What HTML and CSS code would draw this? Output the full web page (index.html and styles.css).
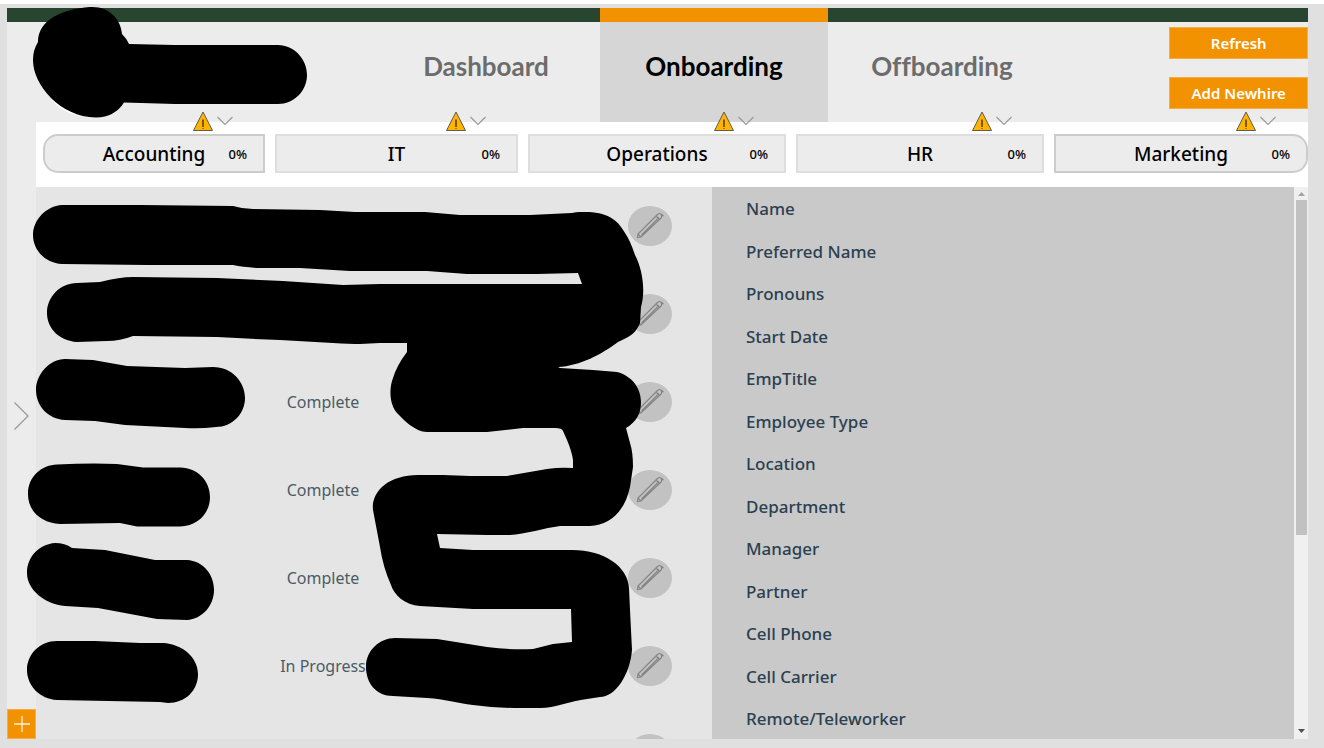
FILE: index.html
```html
<!DOCTYPE html>
<html lang="en">
<head>
<meta charset="utf-8">
<title>Onboarding</title>
<link rel="stylesheet" href="styles.css">
</head>
<body>
<svg class="symbols" aria-hidden="true">
  <symbol id="warning" viewBox="0 0 20 20">
    <path d="M10 1 19.500 19.500H.5Z" fill="#ffb400" stroke="#5f5b50" stroke-width="1"/>
    <path d="M10 8.500v7.500" stroke="#4d3b08" stroke-width="1.500"/>
    <path d="M10 17v1" stroke="#4d3b08" stroke-width="1"/>
  </symbol>
  <symbol id="down" viewBox="0 0 16 20">
    <path d="m.5 6 7.500 7.500L15.500 6" fill="none" stroke="#999" stroke-width="1.200"/>
  </symbol>
  <symbol id="pencil" viewBox="0 0 44 40">
    <path d="M9.500 31.500 10 28 29.500 8.500Q31.500 6.500 33 8.500T33 12L13 31ZM10 28l3 3M28 10l3.500 3.500M13.500 29 31 11.500M33 8l2.500 2" fill="none" stroke="#858585" stroke-width="1.200"/>
  </symbol>
</svg>
<div class="app">
  <header class="header">
    <div class="brand"></div>
    <nav class="tabs">
      <a class="tab" href="#dashboard">Dashboard</a>
      <a class="tab active" href="#onboarding" aria-current="page">Onboarding</a>
      <a class="tab" href="#offboarding">Offboarding</a>
    </nav>
    <div class="actions">
      <button class="action" type="button">Refresh</button>
      <button class="action" type="button">Add Newhire</button>
    </div>
  </header>
  <div class="body">
    <aside class="rail">
      <button class="expand" type="button" aria-label="Expand"><svg width="15" height="28" viewBox="0 0 15 28"><path d="m.5.5 13.500 13.500L.5 27.500" fill="none" stroke="#999" stroke-width="1.300"/></svg></button>
      <button class="add" type="button" aria-label="Add"><svg width="16" height="16" viewBox="0 0 16 16"><path d="M8 0v16M0 8h16" stroke="#fff2dc" stroke-width="1.300"/></svg></button>
    </aside>
    <main class="main">
      <section class="departments">
        <div class="department"><button class="card first" type="button"><span class="title">Accounting</span><span class="percent">0%</span></button><span class="flags"><svg class="warn"><use href="#warning"/></svg><svg class="chevron"><use href="#down"/></svg></span></div>
        <div class="department"><button class="card" type="button"><span class="title">IT</span><span class="percent">0%</span></button><span class="flags"><svg class="warn"><use href="#warning"/></svg><svg class="chevron"><use href="#down"/></svg></span></div>
        <div class="department"><button class="card" type="button"><span class="title">Operations</span><span class="percent">0%</span></button><span class="flags"><svg class="warn"><use href="#warning"/></svg><svg class="chevron"><use href="#down"/></svg></span></div>
        <div class="department"><button class="card" type="button"><span class="title">HR</span><span class="percent">0%</span></button><span class="flags"><svg class="warn"><use href="#warning"/></svg><svg class="chevron"><use href="#down"/></svg></span></div>
        <div class="department"><button class="card last" type="button"><span class="title">Marketing</span><span class="percent">0%</span></button><span class="flags"><svg class="warn"><use href="#warning"/></svg><svg class="chevron"><use href="#down"/></svg></span></div>
      </section>
      <div class="content">
        <div class="list">
          <div class="rows">
            <div class="row"><span class="status"></span><button class="edit" type="button" aria-label="Edit"><svg><use href="#pencil"/></svg></button></div>
            <div class="row"><span class="status"></span><button class="edit" type="button" aria-label="Edit"><svg><use href="#pencil"/></svg></button></div>
            <div class="row"><span class="status">Complete</span><button class="edit" type="button" aria-label="Edit"><svg><use href="#pencil"/></svg></button></div>
            <div class="row"><span class="status">Complete</span><button class="edit" type="button" aria-label="Edit"><svg><use href="#pencil"/></svg></button></div>
            <div class="row"><span class="status">Complete</span><button class="edit" type="button" aria-label="Edit"><svg><use href="#pencil"/></svg></button></div>
            <div class="row"><span class="status">In Progress</span><button class="edit" type="button" aria-label="Edit"><svg><use href="#pencil"/></svg></button></div>
            <div class="row"><span class="status"></span><button class="edit" type="button" aria-label="Edit"><svg><use href="#pencil"/></svg></button></div>
          </div>
        </div>
        <section class="details">
          <ul class="fields">
            <li>Name</li>
            <li>Preferred Name</li>
            <li>Pronouns</li>
            <li>Start Date</li>
            <li>EmpTitle</li>
            <li>Employee Type</li>
            <li>Location</li>
            <li>Department</li>
            <li>Manager</li>
            <li>Partner</li>
            <li>Cell Phone</li>
            <li>Cell Carrier</li>
            <li>Remote/Teleworker</li>
          </ul>
          <div class="scrollbar" aria-hidden="true">
            <svg width="7" height="13" viewBox="0 0 7 13"><path d="M0 9 3.500 5 7 9Z" fill="#a3a3a3"/></svg>
            <div class="track"><div class="thumb"></div></div>
            <svg width="7" height="16" viewBox="0 0 7 16"><path d="M0 6h7L3.500 10Z" fill="#505050"/></svg>
          </div>
        </section>
      </div>
    </main>
  </div>
</div>
<svg class="redactions" viewBox="0 0 1324 748" preserveAspectRatio="none" aria-hidden="true">
  <path d="M48 95Q58 111 79 116L82 112 60 96Z" fill="#fff"/>
  <path d="M38 42C38 20 62 9 90 7C110 6 121 20 122 34Q127 39 129 44L175 45H278C294 45 307 59 307 75S294 104 278 104H175L124 102.500Q115 117 96 117.500C60 117 33 85 33 60Q33 50 38 42Z"/>
  <path d="M62 205H140L233 206Q243 209 253 209L320 210 355 212H425L460 215H530L572 213Q576 212 580 212C605 211 617 218 625 233Q630 240 635 255C642 268 646 290 641 307L640 323C636 332 632 336 618 342C602 354 580 366 558 367L560 368 593 370 617 372C632 376 641 388 641 402C641 414 636 422 626 428L630 443Q633 452 633 467L630 487C625 511 610 525 590 526H560C545 528 525 534 510 535H487L437 534 440 548 473 550H572C605 550 628 567 629 588L630 610 632 650C630 675 615 697 600 697L587 699C570 701 555 708 540 708H520Q495 708 473 705C457 703 445 699 427 698L393 696C376 696 366 683 366 667C366 650 380 638 395 638L437 639 487 647Q510 650 533 649L553 644 572 642 571 609H473L420 606C405 605 394 595 391 585Q383 567 380 547L373 510C371 492 388 475 418 475H443L470 476H507L547 469Q560 467 573 468V460Q572 452 567 440L563 431Q562 428 555 428H523L487 432H427C415 432 403 419 398 414C389 405 389 388 393 378Q397 365 407 352V343H380L360 344Q350 344 333 343L280 340Q250 339 217 337L133 336Q120 341 107 341L77 342C60 341 47 329 47 313S60 283 77 283L100 282Q120 277 133 277L217 278 283 281 343 285 380 284H582L578 273 537 274H467L427 271H350L300 268H257Q243 267 233 265H147L62 264C45 263 33 250 33 235S46 206 62 205Z"/>
  <path d="M65 359 93 360 127 366 185 368 213 367C232 367 245 382 245 398S232 427 216 427Q200 429 185 428L125 425 95 421 65 420C48 419 36 406 36 390S50 359 65 359Z"/>
  <path d="M57 464.500Q90 463 117 464L143 467.500H180C198 468 210 481 210 497S198 526 180 526.500H137L120 523 60 524C42 523 28 512 28 494S42 465 57 464.500Z"/>
  <path d="M55 543Q65 543 72 548L105 550 155 560H187C203 561 214 574 214 590S202 619 187 620L157 619 98 608 65 606C45 604 27 590 27 573S40 544 55 543Z"/>
  <path d="M57 641H95L140 643H163C182 644 198 657 198 674S185 703 168 703L160 702 57 700C40 699 27 686 27 670S40 641 57 641Z"/>
</svg>
</body>
</html>
```
FILE: styles.css
```css
* { box-sizing: border-box; }
body {
  margin: 0;
  background: #e0e0e0;
  border-top: 4px solid #fff;
  font-family: "Noto Sans", "Open Sans", sans-serif;
}
button { font: inherit; border: 0; padding: 0; cursor: pointer; }
.symbols { display: none; }
.app {
  display: flex;
  flex-direction: column;
  min-height: calc(100vh - 4px);
  padding: 4px 16px 9px 7px;
}
.header {
  display: grid;
  grid-template-columns: 365fr 684fr 252fr;
  height: 114px;
  background: linear-gradient(#28462f 14px, #ececec 14px);
}
.tabs { display: grid; grid-template-columns: repeat(3, 1fr); }
.tab {
  display: flex;
  align-items: center;
  justify-content: center;
  border-top: 14px solid #28462f;
  padding-bottom: 12px;
  color: #6c6c6c;
  font: 700 26px/32px Lato, sans-serif;
  font-variant-ligatures: none;
  text-decoration: none;
}
.tab.active { border-color: #f39200; background: #d6d6d6; color: #000; }
.actions {
  display: flex;
  flex-direction: column;
  align-items: flex-end;
  gap: 18px;
  padding-top: 19px;
}
.action {
  width: 55%;
  height: 32px;
  background: #f39200;
  border: 1px solid #f6ad44;
  color: #fff;
  font-size: 15px;
  font-weight: 600;
}
.body { display: flex; flex: 1; }
.rail { display: flex; flex-direction: column; width: 29px; background: #ececec; }
.expand { display: grid; place-items: center; flex: 1; background: none; }
.add {
  display: grid;
  place-items: center;
  height: 30px;
  background: #f39200;
  border: 1px solid #f6ad44;
}
.main { display: flex; flex-direction: column; flex: 1; min-width: 0; }
.departments {
  display: grid;
  grid-template-columns: 222fr 243fr 258fr 248fr 254fr;
  gap: 10px;
  padding: 12px 0 14px 7px;
  background: #fff;
}
.department { position: relative; }
.card {
  display: grid;
  grid-template-columns: 1fr auto 1fr;
  align-items: center;
  width: 100%;
  height: 39px;
  padding: 0 16px;
  background: #ececec;
  border: 2px solid #dedede;
  color: #000;
}
.card.first { border-color: #ccc; border-radius: 15px 0 0 15px; }
.card.last { border-color: #ccc; border-radius: 0 15px 15px 0; }
.title { grid-column: 2; font-size: 19px; font-weight: 500; }
.percent { font-size: 13px; text-align: right; font-weight: 500; }
.flags { position: absolute; top: -23px; right: 32px; display: flex; gap: 4px; }
.warn { width: 20px; height: 20px; }
.chevron { width: 16px; height: 20px; }
.content { display: grid; grid-template-columns: 676fr 596fr; flex: 1; }
.list { position: relative; overflow: hidden; background: #e5e5e5; }
.rows { position: absolute; inset: 0; }
.row {
  display: grid;
  grid-template-columns: 207fr 160px 225fr 44px;
  align-items: center;
  height: 88px;
  padding: 0 40px 10px 0;
}
.status { grid-column: 2; color: #4c5b66; font-size: 16px; text-align: center; }
.edit { grid-column: 4; width: 44px; height: 40px; border-radius: 50%; background: #c2c2c2; }
.edit svg { display: block; width: 44px; height: 40px; }
.details { display: flex; background: #c9c9c9; }
.fields {
  display: flex;
  flex: 1;
  flex-direction: column;
  justify-content: space-between;
  margin: 0;
  padding: 12px 0 10px 34px;
  list-style: none;
  color: #2b4050;
  font-size: 17px;
  font-weight: 500;
  line-height: 20px;
}
.scrollbar {
  display: flex;
  flex-direction: column;
  align-items: center;
  width: 14px;
  background: #f0f0f0;
}
.track { flex: 1; width: 11px; }
.thumb { height: 64%; background: #c1c1c1; }
.redactions {
  position: absolute;
  inset: 0;
  width: 100%;
  height: 100%;
  pointer-events: none;
}
```
